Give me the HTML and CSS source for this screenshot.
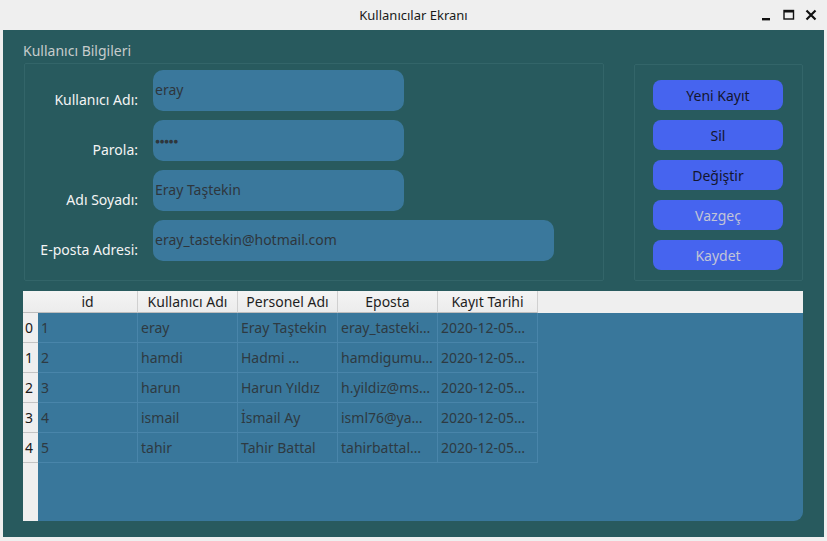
FILE: index.html
```html
<!DOCTYPE html>
<html lang="tr">
<head>
<meta charset="utf-8">
<title>Kullanıcılar Ekranı</title>
<link rel="stylesheet" href="styles.css">
</head>
<body>
<div class="titlebar">
  <span class="title">Kullanıcılar Ekranı</span>
  <div class="controls">
    <svg class="ctl" width="12" height="12" viewBox="0 0 12 12"><rect x="1" y="9" width="8" height="2.4" fill="#111"/></svg>
    <svg class="ctl" width="12" height="12" viewBox="0 0 12 12"><rect x="1" y="1.5" width="9.5" height="8.5" fill="none" stroke="#111" stroke-width="1.4"/><rect x="1" y="1.5" width="9.5" height="2" fill="#111"/></svg>
    <svg class="ctl" width="12" height="12" viewBox="0 0 12 12"><path d="M1.5 1.5 L10.5 10.5 M10.5 1.5 L1.5 10.5" stroke="#111" stroke-width="2.2" fill="none"/></svg>
  </div>
</div>
<div class="window">
  <div class="top">
    <div class="group">
      <div class="group-title">Kullanıcı Bilgileri</div>
      <div class="frame form">
        <label class="lbl">Kullanıcı Adı:</label>
        <div class="input">eray</div>
        <label class="lbl">Parola:</label>
        <div class="input pwd">●●●●●</div>
        <label class="lbl">Adı Soyadı:</label>
        <div class="input">Eray Taştekin</div>
        <label class="lbl">E-posta Adresi:</label>
        <div class="input wide">eray_tastekin@hotmail.com</div>
      </div>
    </div>
    <div class="frame actions">
      <button class="btn">Yeni Kayıt</button>
      <button class="btn">Sil</button>
      <button class="btn">Değiştir</button>
      <button class="btn off">Vazgeç</button>
      <button class="btn off">Kaydet</button>
    </div>
  </div>
  <div class="table">
    <div class="hd corner"></div>
    <div class="hd">id</div>
    <div class="hd">Kullanıcı Adı</div>
    <div class="hd">Personel Adı</div>
    <div class="hd">Eposta</div>
    <div class="hd">Kayıt Tarihi</div>
    <div class="hd fill"></div>

    <div class="vh">0</div><div class="td">1</div><div class="td">eray</div><div class="td">Eray Taştekin</div><div class="td">eray_tasteki…</div><div class="td">2020-12-05…</div><div class="blank"></div>
    <div class="vh">1</div><div class="td">2</div><div class="td">hamdi</div><div class="td">Hadmi …</div><div class="td">hamdigumu…</div><div class="td">2020-12-05…</div><div class="blank"></div>
    <div class="vh">2</div><div class="td">3</div><div class="td">harun</div><div class="td">Harun Yıldız</div><div class="td">h.yildiz@ms…</div><div class="td">2020-12-05…</div><div class="blank"></div>
    <div class="vh">3</div><div class="td">4</div><div class="td">ismail</div><div class="td">İsmail Ay</div><div class="td">isml76@ya…</div><div class="td">2020-12-05…</div><div class="blank"></div>
    <div class="vh">4</div><div class="td">5</div><div class="td">tahir</div><div class="td">Tahir Battal</div><div class="td">tahirbattal…</div><div class="td">2020-12-05…</div><div class="blank"></div>

    <div class="vh empty"></div><div class="blank rest"></div>
  </div>
</div>
</body>
</html>
```

FILE: styles.css
```css
* { box-sizing: border-box; }
html, body { margin: 0; padding: 0; }
body {
  width: 827px;
  height: 541px;
  background: #efefef;
  font-family: "Noto Sans", "Open Sans", sans-serif;
  font-size: 14px;
  overflow: hidden;
}
.titlebar {
  height: 30px;
  position: relative;
  display: flex;
  align-items: center;
  justify-content: center;
  background: #efefef;
  color: #1a1a1a;
}
.title { font-size: 13px; }
.controls {
  position: absolute;
  right: 10px;
  top: 9px;
  display: flex;
  gap: 10px;
}
.ctl { display: block; }
.window {
  margin: 0 3px;
  height: 507px;
  background: #285a5e;
  padding: 12px 21px 16px 20px;
  display: flex;
  flex-direction: column;
  gap: 10px;
}
.top {
  display: flex;
  gap: 30px;
  align-items: flex-end;
}
.group-title {
  color: #c6cccc;
  font-size: 14px;
  line-height: 18px;
  height: 21px;
}
.frame {
  border: 1px solid #336569;
  border-radius: 2px;
}
.form {
  margin-left: 1px;
  width: 580px;
  height: 218px;
  padding: 6px 0 0 0;
  display: grid;
  grid-template-columns: 113px auto;
  column-gap: 15px;
  row-gap: 9px;
  align-content: start;
  justify-content: start;
}
.lbl {
  color: #f4f4f4;
  text-align: right;
  line-height: 20px;
  padding-top: 18px;
  align-self: center;
}
.input {
  width: 251px;
  height: 41px;
  background: #3a789c;
  border-radius: 10px;
  color: #2e363c;
  line-height: 39px;
  padding: 0 2px;
}
.input.wide { width: 401px; }
.input.pwd { font-size: 8.5px; letter-spacing: -0.6px; line-height: 41px; padding-left: 2px; }
.actions {
  width: 170px;
  height: 217px;
  padding: 15px 0 0 18px;
  display: flex;
  flex-direction: column;
  gap: 10px;
}
.btn {
  width: 130px;
  height: 30px;
  border: none;
  border-radius: 8px;
  background: #4664ef;
  color: #14162e;
  font-family: inherit;
  font-size: 14px;
  padding: 0;
}
.btn.off { color: #c2c4d6; }
.table {
  width: 780px;
  height: 231px;
  background: #39779b;
  border-radius: 0 0 9px 0;
  overflow: hidden;
  display: grid;
  grid-template-columns: 15px repeat(5, 100px) 1fr;
  grid-template-rows: 22px repeat(5, 30px) 1fr;
}
.hd {
  background: linear-gradient(#f4f4f4, #ececec);
  border-right: 1px solid #d0d0d0;
  border-bottom: 1px solid #bdbdbd;
  color: #1e1e1e;
  text-align: center;
  line-height: 21px;
}
.hd.corner, .hd.fill { border-right: none; }
.hd.fill { background: #efefef; border-bottom: none; }
.vh {
  background: #efefef;
  border-bottom: 1px solid #c4c4c4;
  color: #1a1a1a;
  line-height: 29px;
  padding-left: 2px;
}
.vh.empty { border-bottom: none; }
.td {
  color: #2e3a42;
  border-right: 1px solid #4985aa;
  border-bottom: 1px solid #4985aa;
  line-height: 29px;
  padding-left: 3px;
  white-space: nowrap;
  overflow: hidden;
}
.blank.rest { grid-column: 2 / 8; }
```
